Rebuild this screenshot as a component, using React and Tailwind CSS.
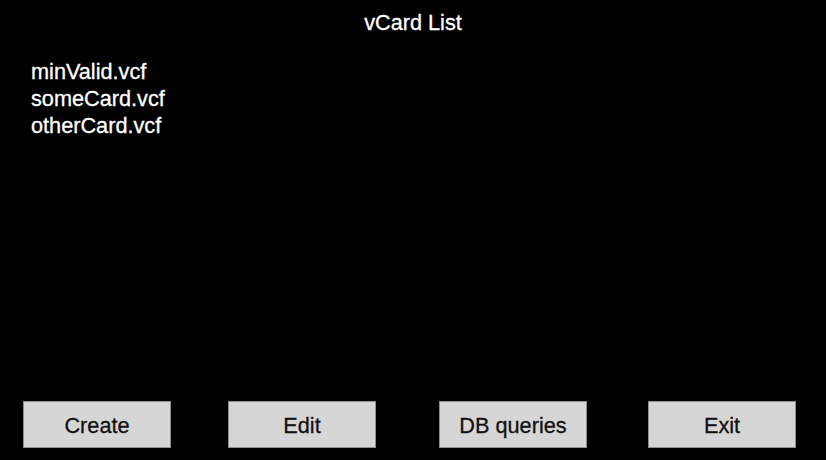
export default function App() {
  const files = ["minValid.vcf", "someCard.vcf", "otherCard.vcf"];
  const btn =
    "box-border h-[47px] w-[148px] shrink-0 border border-[#8e8e8e] bg-[#d6d6d6] pt-[3px] text-[#111] text-[21.7px] leading-[26px] [-webkit-text-stroke:0.3px] flex items-center justify-center";
  return (
    <div
      className="flex h-[460px] w-[826px] flex-col bg-black text-white"
      style={{ fontFamily: '"Liberation Sans", Arial, sans-serif' }}
    >
      <div className="pt-[10px] text-center text-[21.7px] leading-[26px] [-webkit-text-stroke:0.3px]">
        vCard List
      </div>
      <ul className="mt-[22px] pl-[31px] text-[21.7px] leading-[27px] [-webkit-text-stroke:0.3px]">
        {files.map((f) => (
          <li key={f}>{f}</li>
        ))}
      </ul>
      <div className="mt-auto flex pb-[12px] pl-[23px]">
        <button className={btn}>Create</button>
        <button className={btn + " ml-[57px]"}>Edit</button>
        <button className={btn + " ml-[63px]"}>DB queries</button>
        <button className={btn + " ml-[61px]"}>Exit</button>
      </div>
    </div>
  );
}
